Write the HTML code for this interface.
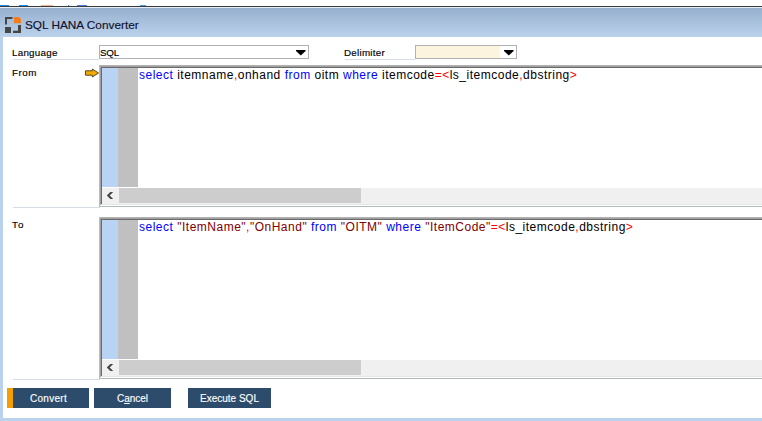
<!DOCTYPE html>
<html><head><meta charset="utf-8">
<style>
*{margin:0;padding:0;box-sizing:border-box}
html,body{width:762px;height:421px;overflow:hidden;background:#fff;font-family:"Liberation Sans",sans-serif}
.a{position:absolute}
#tb{left:0;top:8px;width:762px;height:29px;background:linear-gradient(#97b0cf,#bad2eb)}
#dl{left:0;top:6px;width:762px;height:1px;background:#3a3a3a}
#wl{left:0;top:7px;width:762px;height:1px;background:#e6eef7}
#lb{left:0;top:37px;width:3px;height:384px;background:#bad2eb}
#bb{left:0;top:418px;width:762px;height:3px;background:#bad2eb}
.title{left:25px;top:18px;font-size:11.8px;line-height:14px;color:#10102a;white-space:pre;-webkit-text-stroke:0.15px #10102a}
.lbl{font-size:9.8px;color:#000;white-space:pre;line-height:12px;letter-spacing:0.25px;-webkit-text-stroke:0.15px #000}
.ul{height:1px;background:#d6dde5}
.combo{border:1px solid #afb3b6;background:#fff;height:14px}
.tri{width:0;height:0;border-left:4.5px solid transparent;border-right:4.5px solid transparent;border-top:5px solid #000}
.blue{background:#b9d3f5}
.gray{background:#c0c0c0}
.code{font-size:12px;line-height:14px;white-space:pre;color:#000;letter-spacing:0.5px}
.k{color:#0000ff}.r{color:#ff0000}.m{color:#800000}
.sb{background:#f0f0f0}
.th{background:#cdcdcd}
.btn{top:388px;height:20px;background:#2d4b6b;color:#fff;-webkit-text-stroke:0.15px #fff;font-size:10px;text-align:center;line-height:21px;white-space:pre}
</style></head><body>
<div class="a" id="dl"></div>
<div class="a" id="wl"></div>
<div class="a" id="tb"></div>
<div class="a" id="lb"></div>
<div class="a" id="bb"></div>
<div class="a" style="left:0;top:5px;width:9px;height:1px;background:#1a8cf0"></div>
<div class="a" style="left:19px;top:5px;width:9px;height:1px;background:#1a8cf0"></div>
<div class="a" style="left:41px;top:5px;width:12px;height:1px;background:#f3b38e"></div>
<div class="a" style="left:68px;top:5px;width:1px;height:1px;background:#1e90e0"></div>
<div class="a" style="left:77px;top:5px;width:10px;height:1px;background:#5080e0"></div>
<div class="a" style="left:140px;top:5px;width:6px;height:1px;background:#40a0f0"></div>
<svg class="a" style="left:0;top:0" width="30" height="40">
<rect x="5" y="17" width="7.5" height="2" fill="#454545"/>
<rect x="5" y="17" width="2" height="7.5" fill="#454545"/>
<path d="M14 17 H19 L21 19 V23.3 H14 Z" fill="#f47c20"/>
<rect x="5" y="27" width="6" height="6" fill="#454545"/>
<rect x="18" y="25" width="3" height="8" fill="#454545"/>
<rect x="13" y="30.7" width="8" height="2.3" fill="#454545"/>
</svg>
<div class="a title">SQL HANA Converter</div>
<div class="a lbl" style="left:12px;top:47px">Language</div>
<div class="a ul" style="left:13px;top:59px;width:86px"></div>
<div class="a combo" style="left:99px;top:45px;width:210px"><span class="lbl" style="position:absolute;left:0px;top:1px;letter-spacing:-0.2px">SQL</span></div>
<div class="a lbl" style="left:344px;top:47px">Delimiter</div>
<div class="a ul" style="left:345px;top:59px;width:70px"></div>
<div class="a combo" style="left:415px;top:45px;width:102px;background:linear-gradient(90deg,#fdf4df 84px,#fff 84px)"></div>
<svg class="a" style="left:296px;top:50px" width="11" height="7"><path d="M0 0 H9.6 V0.9 L4.8 5.5 L0 0.9 Z" fill="#000"/></svg>
<svg class="a" style="left:504px;top:50px" width="11" height="7"><path d="M0 0 H9.6 V0.9 L4.8 5.5 L0 0.9 Z" fill="#000"/></svg>
<div class="a lbl" style="left:12px;top:67px;letter-spacing:0.5px">From</div>
<div class="a ul" style="left:13px;top:207px;width:87px"></div>
<svg class="a" style="left:84px;top:68px" width="16" height="10">
<path d="M1.5 2.8 H8.3 V1 L14.5 5 L8.3 9 V7.2 H1.5 Z" fill="#f2a900" stroke="#5a4a20" stroke-width="1"/>
</svg>
<div class="a" style="left:99px;top:65px;width:663px;height:1px;background:#b2b2b2"></div>
<div class="a" style="left:100px;top:66px;width:662px;height:1px;background:#a0a0a0"></div>
<div class="a" style="left:101px;top:67px;width:661px;height:1px;background:#6b6b6b"></div>
<div class="a" style="left:99px;top:65px;width:1px;height:141px;background:#b8bcbc"></div>
<div class="a" style="left:100px;top:66px;width:1px;height:139px;background:#a0a0a0"></div>
<div class="a" style="left:101px;top:67px;width:1px;height:137px;background:#6b6b6b"></div>
<div class="a blue" style="left:102px;top:68px;width:16px;height:119px"></div>
<div class="a gray" style="left:118px;top:68px;width:20px;height:119px"></div>
<div class="a code" style="left:139px;top:68px"><span class="k">select</span> itemname<span class="r">,</span>onhand <span class="k">from</span> oitm <span class="k">where</span> itemcode<span class="r">=&lt;</span>ls_itemcode<span class="r">,</span>dbstring<span class="r">&gt;</span></div>
<div class="a sb" style="left:102px;top:188px;width:660px;height:16px"></div>
<div class="a th" style="left:119px;top:188px;width:242px;height:15px"></div>
<svg class="a" style="left:102px;top:188px" width="16" height="16"><path d="M11.2 4 H8.3 L4.8 7.5 L8.3 11 H11.2 L7.7 7.5 Z" fill="#474747"/></svg>
<div class="a" style="left:101px;top:204px;width:661px;height:1px;background:#e6e6e6"></div>
<div class="a" style="left:100px;top:205px;width:662px;height:1px;background:#fff"></div>
<div class="a" style="left:99px;top:206px;width:663px;height:1px;background:#b4b9b9"></div>

<div class="a lbl" style="left:12px;top:219px;letter-spacing:1.2px">To</div>
<div class="a ul" style="left:13px;top:379px;width:87px"></div>
<div class="a" style="left:99px;top:217px;width:663px;height:1px;background:#b2b2b2"></div>
<div class="a" style="left:100px;top:218px;width:662px;height:1px;background:#a0a0a0"></div>
<div class="a" style="left:101px;top:219px;width:661px;height:1px;background:#6b6b6b"></div>
<div class="a" style="left:99px;top:217px;width:1px;height:161px;background:#b8bcbc"></div>
<div class="a" style="left:100px;top:218px;width:1px;height:159px;background:#a0a0a0"></div>
<div class="a" style="left:101px;top:219px;width:1px;height:157px;background:#6b6b6b"></div>
<div class="a blue" style="left:102px;top:220px;width:16px;height:139px"></div>
<div class="a gray" style="left:118px;top:220px;width:20px;height:139px"></div>
<div class="a code" style="left:139px;top:220px"><span class="k">select</span> <span class="m">"ItemName"</span><span class="r">,</span><span class="m">"OnHand"</span> <span class="k">from</span> <span class="m">"OITM"</span> <span class="k">where</span> <span class="m">"ItemCode"</span><span class="r">=&lt;</span>ls_itemcode<span class="r">,</span>dbstring<span class="r">&gt;</span></div>
<div class="a sb" style="left:102px;top:360px;width:660px;height:16px"></div>
<div class="a th" style="left:119px;top:360px;width:242px;height:15px"></div>
<svg class="a" style="left:102px;top:360px" width="16" height="16"><path d="M11.2 4 H8.3 L4.8 7.5 L8.3 11 H11.2 L7.7 7.5 Z" fill="#474747"/></svg>
<div class="a" style="left:101px;top:376px;width:661px;height:1px;background:#e6e6e6"></div>
<div class="a" style="left:100px;top:377px;width:662px;height:1px;background:#fff"></div>
<div class="a" style="left:99px;top:378px;width:663px;height:1px;background:#b4b9b9"></div>

<div class="a btn" style="left:7px;width:82px;letter-spacing:0.3px;padding-left:1px">Convert</div>
<div class="a" style="left:7px;top:388px;width:6px;height:20px;background:#f2a000"></div>
<div class="a btn" style="left:94px;width:77px">C<u>a</u>ncel</div>
<div class="a btn" style="left:188px;width:83px">Execute SQL</div>
</body></html>
